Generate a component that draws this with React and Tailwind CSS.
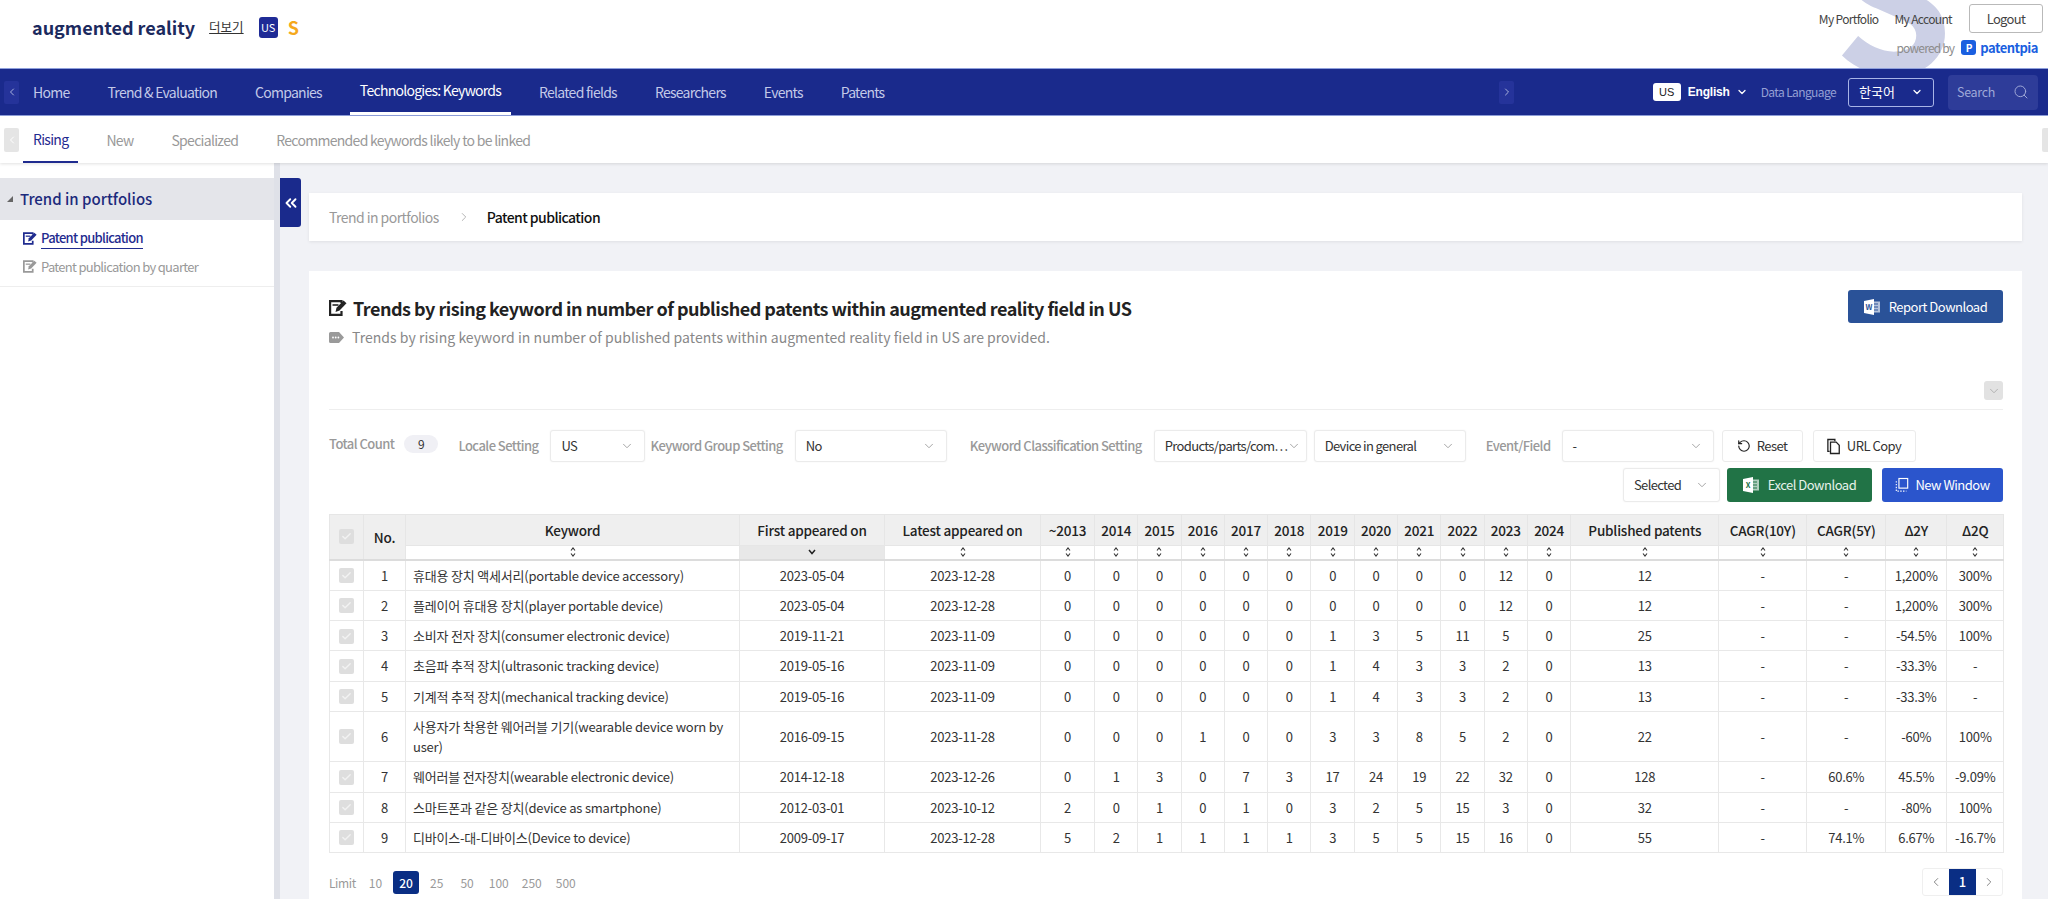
import React from "react";
import { ChevronLeft, ChevronRight, ChevronDown, Search, ChevronsLeft, RotateCcw, Check } from "lucide-react";

const FF = "font-['Noto_Sans_CJK_KR','Noto_Sans',sans-serif]";

function EditIcon({ className }) {
  return (
    <svg viewBox="0 0 18 16" className={className} fill="none" stroke="currentColor">
      <path d="M12.5 3V1.1H1.1v13.8h11.4v-4" strokeWidth="2.2" />
      <path d="M3.5 5h6" strokeWidth="1.6" />
      <path d="M6.5 12l1-4.2 7-7.3 3 2.8-7 7.2z" fill="currentColor" stroke="none" />
    </svg>
  );
}

function TagIcon() {
  return (
    <svg viewBox="0 0 15 11" className="w-[15px] h-[11px] shrink-0">
      <path d="M1.5 0H10l5 5.5L10 11H1.5A1.5 1.5 0 0 1 0 9.5v-8A1.5 1.5 0 0 1 1.5 0z" fill="#9a9a9a" />
      <circle cx="4" cy="5.5" r="0.9" fill="#fff" />
      <circle cx="6.7" cy="5.5" r="0.9" fill="#fff" />
      <circle cx="9.4" cy="5.5" r="0.9" fill="#fff" />
    </svg>
  );
}

function OfficeIcon({ letter, fill }) {
  return (
    <svg viewBox="0 0 16 16" className="w-4 h-4 shrink-0">
      <rect x="8" y="2.5" width="8" height="11" fill="#fff" opacity="0.65" />
      <path d="M10 5h4M10 8h4M10 11h4" stroke={fill} strokeWidth="1" />
      <path d="M0 2l10-2v16L0 14z" fill="#fff" />
      <text x="4.8" y="10.6" fontSize="7.5" fontWeight="700" textAnchor="middle" fill={fill}>{letter}</text>
    </svg>
  );
}

function CopyIcon() {
  return (
    <svg viewBox="0 0 16 18" className="w-[14px] h-[17px] shrink-0" fill="none" stroke="#222" strokeWidth="1.5">
      <path d="M3 14.5H1V1h8v2" />
      <path d="M4 4h6.5L14 7.5V17H4z" fill="#fff" />
    </svg>
  );
}

function WindowIcon() {
  return (
    <svg viewBox="0 0 16 18" className="w-[14px] h-[17px] shrink-0" fill="none" stroke="#fff" strokeWidth="1.3">
      <rect x="4.5" y="1" width="10" height="11" />
      <path d="M1.5 4v11.5H13" strokeDasharray="1.6 1.6" />
    </svg>
  );
}

function SortIcon({ active }) {
  if (active) {
    return (
      <svg viewBox="0 0 8 6" className="w-2 h-[6px] mx-auto block" fill="none" stroke="#222" strokeWidth="1.5">
        <path d="M1 1l3 3.5L7 1" />
      </svg>
    );
  }
  return (
    <svg viewBox="0 0 6 10" className="w-[6px] h-[10px] mx-auto block" fill="none" stroke="#333" strokeWidth="1.1">
      <path d="M1 3.5L3 1l2 2.5M1 6.5L3 9l2-2.5" />
    </svg>
  );
}

function Checkbox() {
  return (
    <span className="mx-auto w-[15px] h-[15px] rounded-[2px] bg-[#dedede] flex items-center justify-center">
      <Check className="w-[11px] h-[11px] text-[#f2f2f2]" strokeWidth={3} />
    </span>
  );
}

function Select({ label, w }) {
  return (
    <div className={`${w} shrink-0 border border-[#ebebeb] rounded-[3px] bg-white shadow-[0_0_2px_rgba(0,0,0,0.06)] flex items-center justify-between pl-[10px] pr-[10px] text-[13px] font-normal text-[#333] tracking-[-0.65px]`}>
      <span className="whitespace-nowrap">{label}</span>
      <ChevronDown className="w-[14px] h-[14px] text-[#999] shrink-0" strokeWidth={1.5} />
    </div>
  );
}

const years = ["~2013", "2014", "2015", "2016", "2017", "2018", "2019", "2020", "2021", "2022", "2023", "2024"];

const rows = [
  ["휴대용 장치 액세서리(portable device accessory)", "2023-05-04", "2023-12-28", [0,0,0,0,0,0,0,0,0,0,12,0], 12, "-", "-", "1,200%", "300%"],
  ["플레이어 휴대용 장치(player portable device)", "2023-05-04", "2023-12-28", [0,0,0,0,0,0,0,0,0,0,12,0], 12, "-", "-", "1,200%", "300%"],
  ["소비자 전자 장치(consumer electronic device)", "2019-11-21", "2023-11-09", [0,0,0,0,0,0,1,3,5,11,5,0], 25, "-", "-", "-54.5%", "100%"],
  ["초음파 추적 장치(ultrasonic tracking device)", "2019-05-16", "2023-11-09", [0,0,0,0,0,0,1,4,3,3,2,0], 13, "-", "-", "-33.3%", "-"],
  ["기계적 추적 장치(mechanical tracking device)", "2019-05-16", "2023-11-09", [0,0,0,0,0,0,1,4,3,3,2,0], 13, "-", "-", "-33.3%", "-"],
  ["사용자가 착용한 웨어러블 기기(wearable device worn by user)", "2016-09-15", "2023-11-28", [0,0,0,1,0,0,3,3,8,5,2,0], 22, "-", "-", "-60%", "100%"],
  ["웨어러블 전자장치(wearable electronic device)", "2014-12-18", "2023-12-26", [0,1,3,0,7,3,17,24,19,22,32,0], 128, "-", "60.6%", "45.5%", "-9.09%"],
  ["스마트폰과 같은 장치(device as smartphone)", "2012-03-01", "2023-10-12", [2,0,1,0,1,0,3,2,5,15,3,0], 32, "-", "-", "-80%", "100%"],
  ["디바이스-대-디바이스(Device to device)", "2009-09-17", "2023-12-28", [5,2,1,1,1,1,3,5,5,15,16,0], 55, "-", "74.1%", "6.67%", "-16.7%"],
];

const thBase = "border border-[#e6e6e6] bg-[#efefef] font-medium text-[13.5px] text-[#222] h-[31px] p-0 tracking-[-0.2px] whitespace-nowrap";
const sortBase = "border-x border-[#e6e6e6] border-b-2 border-b-[#dcdcdc] bg-white h-[14px] p-0";
const td = "border border-[#e8e8e8] pt-[5px] pb-[4.3px] px-0 leading-[20px] text-center text-[13px] text-[#333] tracking-[-0.2px]";
const label = "tracking-[-0.55px] whitespace-nowrap";

export default function App() {
  const tailHeads = [
    ["Published patents", "w-[148px]"],
    ["CAGR(10Y)", "w-[88px]"],
    ["CAGR(5Y)", "w-[79px]"],
    ["Δ2Y", "w-[61px]"],
    ["Δ2Q", "w-[57px]"],
  ];
  return (
    <div className={`${FF} h-screen overflow-hidden bg-[#f1f2f6] flex flex-col`}>
      {/* top header */}
      <header className="relative h-[68px] shrink-0 bg-white overflow-hidden flex justify-between">
        <span aria-hidden="true" className="absolute left-[1834px] top-[-104px] text-[190px] leading-[190px] font-bold text-[#ccd0e6]">S</span>
        <div className="relative flex items-center h-[54px] pl-[32px]">
          <span className="text-[18px] font-bold text-[#1c2a5e]">augmented reality</span>
          <span className="ml-[14px] text-[12.5px] text-[#333] underline">더보기</span>
          <span className="ml-[15px] w-[19px] h-[21px] rounded-[3px] bg-[#1f2b96] text-white text-[11px] flex items-center justify-center">US</span>
          <span className="ml-[10px] text-[18px] font-bold text-[#f5a81c]">S</span>
        </div>
        <div className="relative flex flex-col items-end pr-[5px] pt-[4px]">
          <div className="flex items-center text-[12px] text-[#444] tracking-[-0.65px]">
            <span>My Portfolio</span>
            <span className="ml-[16px]">My Account</span>
            <span className="ml-[17px] w-[74px] h-[29px] border border-[#b9b9b9] rounded-[3px] flex items-center justify-center bg-white text-[13px]">Logout</span>
          </div>
          <div className="flex items-center mt-[5px] pr-[5px] text-[12px] text-[#8c8c8c] tracking-[-0.8px]">
            <span>powered by</span>
            <span className="ml-[7px] w-[15px] h-[15px] rounded-[3px] bg-[#1a5fe0] text-white text-[10px] font-bold flex items-center justify-center">P</span>
            <span className="ml-[4px] text-[13px] font-bold text-[#1a5fe0] tracking-[-0.5px]">patentpia</span>
          </div>
        </div>
      </header>

      {/* main nav */}
      <nav className="h-[48px] shrink-0 bg-[#1a2a8c] border-y border-[#8fa0dc] flex items-center justify-between pl-[4px] pr-[10px] text-[14px]">
        <div className="w-[1510px] h-full flex items-center tracking-[-0.74px]">
          <span className="w-[15px] h-[23px] rounded-[2px] bg-[#25339a] flex items-center justify-center"><ChevronLeft className="w-3 h-3 text-[#aab2dc]" /></span>
          <div className="flex h-full ml-[4px] gap-[18px]">
            {["Home", "Trend & Evaluation", "Companies", "Technologies: Keywords", "Related fields", "Researchers", "Events", "Patents"].map((t, i) => (
              <span key={t} className={`px-[10px] h-full flex items-center whitespace-nowrap ${i === 3 ? "text-white border-b-[3px] border-white" : "text-[#c3c9e8]"}`}>{t}</span>
            ))}
          </div>
          <span className="ml-auto w-[15px] h-[23px] rounded-[2px] bg-[#25339a] flex items-center justify-center"><ChevronRight className="w-3 h-3 text-[#aab2dc]" /></span>
        </div>
        <div className="flex items-center whitespace-nowrap">
          <span className="w-[28px] h-[18px] rounded-[3px] bg-white text-[#222] text-[11px] font-['Liberation_Sans',sans-serif] flex items-center justify-center">US</span>
          <span className="ml-[7px] text-[12px] font-['Liberation_Sans',sans-serif] font-bold text-white tracking-[-0.2px]">English</span>
          <ChevronDown className="ml-[6px] w-[12px] h-[12px] text-white" strokeWidth={2.5} />
          <span className="ml-[13px] text-[12px] text-[#95a0d4] tracking-[-0.6px]">Data Language</span>
          <span className="ml-[12px] w-[86px] h-[29px] rounded-[3px] border border-[#a8b4e6] flex items-center justify-between pl-[10px] pr-[10px] text-[13px] text-white">
            한국어<ChevronDown className="w-[12px] h-[12px]" strokeWidth={2.5} />
          </span>
          <span className="ml-[14px] w-[90px] h-[35px] rounded-[4px] bg-[#2e3c99] flex items-center justify-between pl-[9px] pr-[9px] text-[12.5px] text-[#9fa8d8] tracking-[-0.3px]">
            Search<Search className="w-[16px] h-[16px]" strokeWidth={1.5} />
          </span>
        </div>
      </nav>

      {/* sub nav */}
      <div className="h-[47px] shrink-0 bg-white shadow-[0_1px_3px_rgba(0,0,0,0.12)] z-10 flex items-center pl-[4px] text-[14px] tracking-[-0.7px] relative">
        <span className="w-[15px] h-[24px] rounded-[2px] bg-[#e5e5e5] flex items-center justify-center"><ChevronLeft className="w-3 h-3 text-white" /></span>
        <div className="flex h-full ml-[4px] gap-[18px]">
          <span className="px-[10px] h-full flex items-center pt-[2px] text-[#1f2b8f] border-b-2 border-[#1f2b8f]">Rising</span>
          <span className="px-[10px] h-full flex items-center pt-[2px] text-[#999]">New</span>
          <span className="px-[10px] h-full flex items-center pt-[2px] text-[#999]">Specialized</span>
          <span className="px-[10px] h-full flex items-center pt-[2px] text-[#999]">Recommended keywords likely to be linked</span>
        </div>
        <span className="ml-auto w-[6px] h-[24px] rounded-l-[2px] bg-[#e5e5e5]"></span>
      </div>

      {/* body */}
      <div className="flex flex-1 min-h-0">
        <aside className="w-[274px] shrink-0 bg-white pt-[15px]">
          <div className="h-[42px] bg-[#e4e5ea] flex items-center pl-[7px]">
            <svg viewBox="0 0 6 6" className="w-[6px] h-[6px] text-[#666]"><path d="M6 0v6H0z" fill="currentColor" /></svg>
            <span className="ml-[7px] text-[15px] font-medium text-[#1c2a7c]">Trend in portfolios</span>
          </div>
          <div className="border-b border-[#eeeeee] pb-[8px] pl-[23px] text-[13px]">
            <div className="flex items-center h-[32px] text-[#1f2b8f] pt-[5px]">
              <EditIcon className="w-[14px] h-[13px] shrink-0" />
              <span className="ml-[4px] font-medium border-b border-[#1f2b8f] leading-[20px] tracking-[-0.7px]">Patent publication</span>
            </div>
            <div className="flex items-center h-[23px] text-[#999] mt-[3px]">
              <EditIcon className="w-[14px] h-[13px] shrink-0" />
              <span className="ml-[4px] tracking-[-0.7px]">Patent publication by quarter</span>
            </div>
          </div>
        </aside>
        <div className="w-[6px] shrink-0 bg-[#dfe1e8]"></div>
        <button className="w-[21px] h-[49px] mt-[15px] shrink-0 bg-[#1a2a8c] rounded-r-[3px] flex items-center justify-center text-white">
          <ChevronsLeft className="w-[18px] h-[18px]" strokeWidth={2.5} />
        </button>

        <main className="flex-1 min-w-0 ml-[8px] mr-[26px] pt-[30px]">
          <div className="h-[48px] bg-white shadow-[0_1px_3px_rgba(0,0,0,0.08)] flex items-center pl-[20px] text-[14px] tracking-[-0.55px]">
            <span className="text-[#999]">Trend in portfolios</span>
            <ChevronRight className="w-[14px] h-[14px] ml-[18px] text-[#aaa]" strokeWidth={1.5} />
            <span className="ml-[16px] font-medium text-[#111]">Patent publication</span>
          </div>

          <section className="mt-[30px] bg-white pl-[20px] pr-[19px] h-[700px]">
            <div className="h-[139px] border-b border-[#eeeeee] flex flex-col pt-[19px]">
              <div className="flex justify-between items-start">
                <div className="pt-[5px]">
                  <div className="flex items-center">
                    <EditIcon className="w-[18px] h-[16px] text-[#222] shrink-0" />
                    <h1 className="ml-[6px] text-[18px] font-bold text-[#222] leading-[26px] tracking-[-0.5px]">Trends by rising keyword in number of published patents within augmented reality field in US</h1>
                  </div>
                  <div className="flex items-center mt-[5px]">
                    <TagIcon />
                    <p className="ml-[8px] text-[14px] text-[#888] leading-[22px] tracking-[0.03px]">Trends by rising keyword in number of published patents within augmented reality field in US are provided.</p>
                  </div>
                </div>
                <button className="w-[155px] h-[33px] rounded-[3px] bg-[#2a5298] text-white text-[13px] tracking-[-0.5px] flex items-center justify-center gap-[9px]">
                  <OfficeIcon letter="W" fill="#2a5298" />Report Download
                </button>
              </div>
              <span className="ml-auto mt-auto mb-[9px] w-[19px] h-[19px] rounded-[3px] bg-[#e2e2e2] flex items-center justify-center"><ChevronDown className="w-[14px] h-[14px] text-[#aaa]" strokeWidth={1.5} /></span>
            </div>

            <div className="mt-[20px] h-[32px] flex items-center text-[13px] text-[#999] font-medium">
              <span className={`-mt-[4px] ${label}`}>Total Count</span>
              <span className="-mt-[4px] ml-[10px] w-[34px] h-[18px] rounded-full bg-[#f0f0f5] flex items-center justify-center text-[12px] text-[#333] font-normal">9</span>
              <span className={`ml-[20px] ${label}`}>Locale Setting</span>
              <Select label="US" w="ml-[12px] w-[95px] h-[32px]" />
              <span className={`ml-[5px] ${label}`}>Keyword Group Setting</span>
              <Select label="No" w="ml-[12px] w-[152px] h-[32px]" />
              <span className={`ml-[23px] ${label}`}>Keyword Classification Setting</span>
              <Select label="Products/parts/com⋯" w="ml-[12px] w-[153px] h-[32px]" />
              <Select label="Device in general" w="ml-[7px] w-[152px] h-[32px]" />
              <span className={`ml-[20px] ${label}`}>Event/Field</span>
              <Select label="-" w="ml-[11px] w-[152px] h-[32px]" />
              <button className="ml-[8px] w-[81px] h-[32px] border border-[#ebebeb] rounded-[3px] flex items-center justify-center gap-[6px] text-[#333] font-normal tracking-[-0.5px]">
                <RotateCcw className="w-[14px] h-[14px] text-[#222]" strokeWidth={2} />Reset
              </button>
              <button className="ml-[10px] w-[103px] h-[32px] border border-[#ebebeb] rounded-[3px] flex items-center justify-center gap-[6px] text-[#333] font-normal tracking-[-0.5px]">
                <CopyIcon />URL Copy
              </button>
            </div>

            <div className="mt-[6px] h-[34px] flex items-center justify-end text-[13px] tracking-[-0.5px]">
              <Select label="Selected" w="w-[97px] h-[34px]" />
              <button className="ml-[7px] w-[145px] h-[34px] rounded-[3px] bg-[#217346] text-[#e6f2ea] flex items-center justify-center gap-[9px]">
                <OfficeIcon letter="X" fill="#217346" />Excel Download
              </button>
              <button className="ml-[10px] w-[121px] h-[34px] rounded-[3px] bg-[#2b55cc] text-white flex items-center justify-center gap-[6px]">
                <WindowIcon />New Window
              </button>
            </div>

            <table className="mt-[12px] w-[1674px] table-fixed border-collapse">
              <thead>
                <tr>
                  <th rowSpan={2} className={`${thBase} w-[34px] border-b-2 border-b-[#dcdcdc]`}><Checkbox /></th>
                  <th rowSpan={2} className={`${thBase} w-[42px] border-b-2 border-b-[#dcdcdc]`}>No.</th>
                  <th className={`${thBase} w-[334px]`}>Keyword</th>
                  <th className={`${thBase} w-[145px]`}>First appeared on</th>
                  <th className={`${thBase} w-[156px]`}>Latest appeared on</th>
                  {years.map((y, i) => <th key={y} className={`${thBase} ${i === 0 ? "w-[54px]" : "w-[43.3px]"}`}>{y}</th>)}
                  {tailHeads.map(([h, w]) => <th key={h} className={`${thBase} ${w}`}>{h}</th>)}
                </tr>
                <tr>
                  <th className={sortBase}><SortIcon /></th>
                  <th className={`${sortBase} !bg-[#e8e8e8]`}><SortIcon active /></th>
                  {Array.from({ length: 18 }, (_, i) => <th key={i} className={sortBase}><SortIcon /></th>)}
                </tr>
              </thead>
              <tbody>
                {rows.map((r, i) => (
                  <tr key={i}>
                    <td className={td}><Checkbox /></td>
                    <td className={td}>{i + 1}</td>
                    <td className={`${td} !text-left pl-[7px] pr-[2px]`}>{r[0]}</td>
                    <td className={td}>{r[1]}</td>
                    <td className={td}>{r[2]}</td>
                    {r[3].map((v, j) => <td key={j} className={td}>{v}</td>)}
                    <td className={td}>{r[4]}</td>
                    <td className={td}>{r[5]}</td>
                    <td className={td}>{r[6]}</td>
                    <td className={td}>{r[7]}</td>
                    <td className={td}>{r[8]}</td>
                  </tr>
                ))}
              </tbody>
            </table>

            <div className="mt-[16px] flex items-center justify-between">
              <div className="flex items-center text-[12px] text-[#999] h-[23px]">
                <span className="tracking-[-0.4px]">Limit</span>
                <span className="ml-[13px]">10</span>
                <span className="ml-[11px] w-[26px] h-[23px] rounded-[3px] bg-[#0a2e84] text-white flex items-center justify-center font-medium">20</span>
                <span className="ml-[11px]">25</span>
                <span className="ml-[17px]">50</span>
                <span className="ml-[15px]">100</span>
                <span className="ml-[13px]">250</span>
                <span className="ml-[14px]">500</span>
              </div>
              <div className="flex h-[28px] -mt-[1px] border border-[#efefef] rounded-[3px] text-[13px]">
                <span className="w-[26px] flex items-center justify-center"><ChevronLeft className="w-[14px] h-[14px] text-[#777]" strokeWidth={1.5} /></span>
                <span className="w-[27px] bg-[#0a2e84] text-white flex items-center justify-center font-medium">1</span>
                <span className="w-[26px] flex items-center justify-center"><ChevronRight className="w-[14px] h-[14px] text-[#777]" strokeWidth={1.5} /></span>
              </div>
            </div>
          </section>
        </main>
      </div>
    </div>
  );
}
